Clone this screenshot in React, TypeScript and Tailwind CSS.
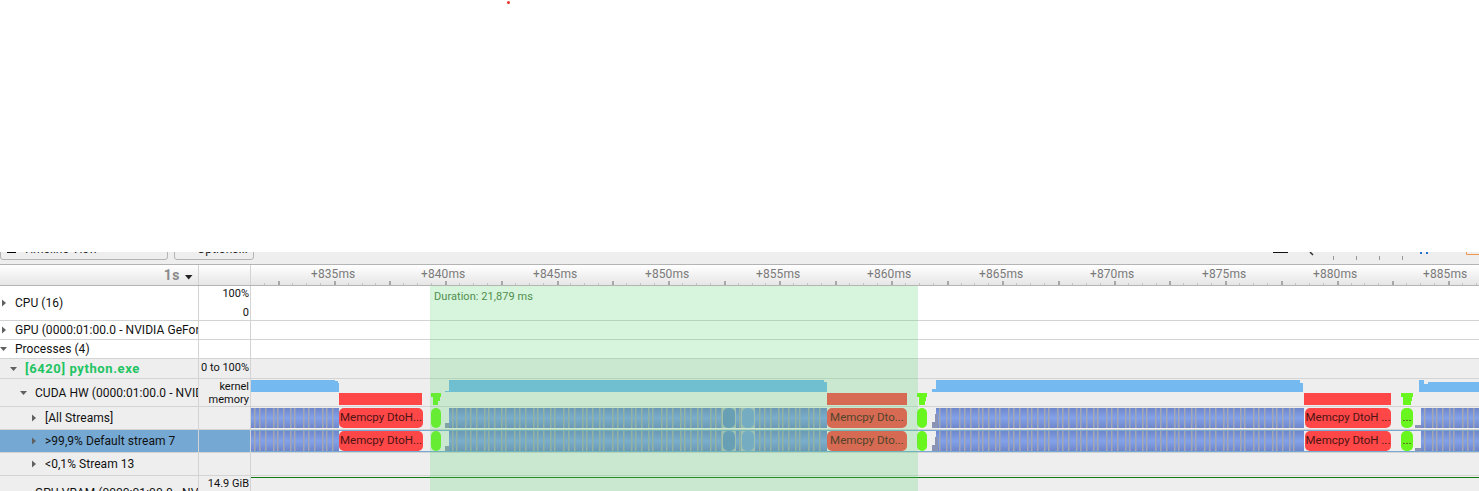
import React from 'react';

const TRACK_LEFT = 251;

// x positions below are page coordinates, same as the ruler
const bands = [
  [251, 339],
  [449, 827],
  [936, 1304],
  [1421, 1479],
];

const steps = [
  [445, 449, 15],
  [932, 936, 14],
  [935, 938, 6],
  [1415, 1421, 17],
];

const pills = [
  { left: 339, right: 423, text: 'Memcpy DtoH...', color: 'bg-[#ff4747]' },
  { left: 431, right: 441, text: '', color: 'bg-[#69f51e]' },
  { left: 827, right: 907, text: 'Memcpy Dto...', color: 'bg-[#ff4747]' },
  { left: 917, right: 927, text: '', color: 'bg-[#69f51e]' },
  { left: 1305, right: 1391, text: 'Memcpy DtoH ...', color: 'bg-[#ff4747]' },
  { left: 1401, right: 1413, text: '...', color: 'bg-[#69f51e]' },
];

const kernel = [
  [251, 335, 0],
  [335, 338, 1],
  [338, 339, 3],
  [445, 449, 11],
  [449, 824, 0],
  [824, 827, 2],
  [932, 936, 9],
  [936, 1300, 0],
  [1300, 1303, 3],
  [1419, 1424, 0],
  [1424, 1428, 4],
  [1428, 1479, 2],
];

const memory = [
  { left: 339, right: 422, color: 'bg-[#ff4747]' },
  { left: 827, right: 907, color: 'bg-[#ff4747]' },
  { left: 1304, right: 1391, color: 'bg-[#ff4747]' },
];

// green memory markers: top edge, then the narrower stem under it
const markers = [
  { a: 431, b: 441, c: 433, d: 438 },
  { a: 917, b: 927, c: 919, d: 925 },
  { a: 1401, b: 1413, c: 1403, d: 1411 },
];

const labels = [
  ['+835ms', 311],
  ['+840ms', 421],
  ['+845ms', 533],
  ['+850ms', 645],
  ['+855ms', 756],
  ['+860ms', 867],
  ['+865ms', 979],
  ['+870ms', 1090],
  ['+875ms', 1202],
  ['+880ms', 1313],
  ['+885ms', 1423],
] as const;

const pos = (left: number, right: number) => ({
  left: left - TRACK_LEFT,
  width: right - left,
});

function Arrow({ open }: { open?: boolean }) {
  return (
    <svg width="8" height="8" viewBox="0 0 8 8" className="shrink-0">
      {open ? <path d="M0 2h7L3.500 6z" fill="#606060" /> : <path d="M2 0.500v7L6 4z" fill="#606060" />}
    </svg>
  );
}

function Row({
  indent,
  open,
  label,
  labelClass,
  scale,
  height,
  white,
  selected,
  children,
}: {
  indent: string;
  open?: boolean;
  label: string;
  labelClass?: string;
  scale?: React.ReactNode;
  height: string;
  white?: boolean;
  selected?: boolean;
  children?: React.ReactNode;
}) {
  const bg = selected ? 'bg-[#75a8d3]' : white ? 'bg-white' : 'bg-[#eeeeee]';
  return (
    <div className={`flex ${height} border-b border-[#d3d3d3] ${white ? 'bg-white' : 'bg-[#eeeeee]'}`}>
      <div className={`flex w-[198px] shrink-0 items-center gap-[7px] overflow-hidden whitespace-nowrap ${indent} ${bg}`}>
        <Arrow open={open} />
        <span className={labelClass ?? 'text-[12px] tracking-[0.05px] text-[#111]'}>{label}</span>
      </div>
      <div className={`w-[53px] shrink-0 border-x border-[#d3d3d3] pr-[1px] text-right text-[11px] leading-[14px] text-[#111] ${bg}`}>
        {scale}
      </div>
      <div className="relative min-w-0 flex-1">{children}</div>
    </div>
  );
}

function StreamBands() {
  const stripes: number[] = [];
  bands.forEach(([a, b]) => {
    let x = a + 3;
    let i = 0;
    while (x < b - 2) {
      stripes.push(x);
      x += [7, 4, 9, 5, 6, 8, 4, 6][(i + a) % 8];
      i++;
    }
  });
  return (
    <svg width="1228" height="20" className="absolute left-0 top-[1px]">
      <defs>
        <linearGradient id="band" x1="0" y1="0" x2="0" y2="1">
          <stop offset="0" stopColor="#6f86ca" />
          <stop offset="0.5" stopColor="#83a2ea" />
          <stop offset="1" stopColor="#6f86ca" />
        </linearGradient>
      </defs>
      {bands.map(([a, b]) => (
        <rect key={a} x={a - TRACK_LEFT} y="0" width={b - a} height="20" fill="url(#band)" />
      ))}
      {stripes.map((x) => (
        <rect key={x} x={x - TRACK_LEFT} y="0" width="1.500" height="20" fill="#a3a7b2" />
      ))}
      {steps.map(([a, b, top]) => (
        <rect key={a + top} x={a - TRACK_LEFT} y={top} width={b - a} height={20 - top} fill="#8b93b5" />
      ))}
      <rect x={722 - TRACK_LEFT} y="0" width="14" height="20" fill="#b5bcc4" />
      <rect x={741 - TRACK_LEFT} y="0" width="14" height="20" fill="#b5bcc4" />
      <rect x={723 - TRACK_LEFT} y="0" width="12" height="20" rx="5" fill="#6d8ecb" />
      <rect x={742 - TRACK_LEFT} y="0" width="12" height="20" rx="5" fill="#7c9fdd" />
    </svg>
  );
}

function StreamTrack({ lined }: { lined?: boolean }) {
  return (
    <div className="absolute inset-0">
      <StreamBands />
      {lined && <div className="absolute left-0 right-0 top-0 h-px bg-[#75a8d3]" />}
      {lined && <div className="absolute left-0 right-0 top-[21px] h-px bg-[#75a8d3]" />}
      {pills.map((p) => (
        <div
          key={p.left}
          className={`absolute top-[1px] flex h-[20px] items-center justify-center overflow-hidden whitespace-nowrap rounded-[5px] text-[11.5px] text-[#4d1414] ${p.color}`}
          style={pos(p.left, p.right)}
        >
          {p.text}
        </div>
      ))}
    </div>
  );
}

function HwTrack() {
  return (
    <div className="absolute inset-0">
      <svg width="1228" height="13" className="absolute left-0 top-[1px]">
        {kernel.map(([a, b, top]) => (
          <rect key={a} x={a - TRACK_LEFT} y={top} width={b - a} height={12 - top} fill="#74b9f0" />
        ))}
      </svg>
      {memory.map((m) => (
        <div key={m.left} className={`absolute top-[14px] h-[12px] ${m.color}`} style={pos(m.left, m.right)} />
      ))}
      <svg width="1228" height="12" className="absolute left-0 top-[14px]">
        {markers.map((m) => (
          <path
            key={m.a}
            d={`M${m.a - TRACK_LEFT} 0H${m.b - TRACK_LEFT}V4H${m.b - TRACK_LEFT - 1}V8H${m.d - TRACK_LEFT}V12H${m.c - TRACK_LEFT}V4H${m.a - TRACK_LEFT}z`}
            fill="#69f51e"
          />
        ))}
      </svg>
    </div>
  );
}

function Ruler() {
  const ticks: { x: number; major: boolean }[] = [];
  for (let i = 0; i < 90; i++) {
    ticks.push({ x: Math.round(264 + i * 13.93), major: (i - 1) % 4 === 0 });
  }
  return (
    <div className="flex h-[21px] border-b border-[#b4b4b4] bg-linear-to-b from-white to-[#e6e6e6]">
      <div className="flex w-[198px] shrink-0 items-center justify-end gap-[5px] pr-[5px] font-bold">
        <span className="text-[14px] tracking-[0.5px] text-[#8a8a8a]">1s</span>
        <svg width="8" height="5" viewBox="0 0 8 5" className="mt-[4px]">
          <path d="M0 0h7.500L3.700 4.500z" fill="#222" />
        </svg>
      </div>
      <div className="w-[53px] shrink-0 border-x border-[#d3d3d3]" />
      <div className="relative flex-1 overflow-hidden">
        {labels.map(([text, x]) => (
          <span
            key={text}
            className="absolute top-[1px] text-[12px] leading-[16px] tracking-[0.1px] text-[#7a7a7a]"
            style={{ left: x - TRACK_LEFT }}
          >
            {text}
          </span>
        ))}
        <svg width="1228" height="20" className="absolute left-0 top-0">
          {ticks.map((t) => (
            <rect
              key={t.x}
              x={t.x - TRACK_LEFT}
              y={t.major ? 16 : 18}
              width={t.major ? 2 : 1}
              height={t.major ? 4 : 2}
              fill={t.major ? '#a8a8a8' : '#c4c4c4'}
            />
          ))}
        </svg>
      </div>
    </div>
  );
}

function Toolbar() {
  return (
    <div className="flex h-[13px] items-end overflow-hidden border-b border-[#b4b4b4] bg-[#eeeeee] pb-[4px]">
      <div className="flex h-[22px] w-[168px] shrink-0 items-center rounded-b-[3px] border border-[#b4b4b4] pl-[6px] text-[12px] text-[#222]">
        <span className="mt-[6px] h-px w-[9px] bg-black" />
        <span className="ml-[7px]">Timeline View</span>
      </div>
      <div className="ml-[6px] flex h-[22px] w-[80px] shrink-0 items-center rounded-b-[3px] border border-[#b4b4b4] pl-[22px] text-[12px] text-[#222]">
        <span>Options...</span>
      </div>
      <svg width="219" height="12" className="mb-[-4px] ml-auto shrink-0">
        <rect x="13" y="0" width="15" height="1" fill="#111" />
        <path d="M50 0l3 3" stroke="#333" strokeWidth="1.500" />
        {[73, 96, 119, 142].map((x) => (
          <rect key={x} x={x} y="4" width="1" height="4" fill="#999" />
        ))}
        <rect x="160" y="0" width="2" height="2" fill="#2a6fc9" />
        <rect x="166" y="0" width="2" height="2" fill="#2a6fc9" />
        <path d="M206.500 0v2.500H219" fill="none" stroke="#f0964a" strokeWidth="1" />
      </svg>
    </div>
  );
}

export default function App() {
  return (
    <div className="relative h-[491px] overflow-hidden bg-white font-['Roboto',sans-serif]">
      <div className="absolute left-[507px] top-[1px] h-[3px] w-[3px] rounded-full bg-[#e8322a]" />
      <div className="h-[252px]" />
      <Toolbar />
      <Ruler />
      <div className="relative">
        <Row indent="pl-0" label="CPU (16)" height="h-[35px]" white scale={<div className="flex h-full flex-col justify-between pt-[1px]"><span>100%</span><span>0</span></div>} />
        <Row indent="pl-0" label="GPU (0000:01:00.0 - NVIDIA GeForce RTX" height="h-[19px]" white />
        <Row indent="pl-0" open label="Processes (4)" height="h-[19px]" white />
        <Row
          indent="pl-[10px]"
          open
          label="[6420] python.exe"
          labelClass="text-[13px] font-bold tracking-[0.6px] text-[#1fc463]"
          height="h-[20px]"
          scale={<span className="leading-[18px]">0 to 100%</span>}
        />
        <Row
          indent="pl-[20px]"
          open
          label="CUDA HW (0000:01:00.0 - NVIDIA GeForce"
          height="h-[28px]"
          scale={<div className="pt-[1px] leading-[13px]">kernel<br />memory</div>}
        >
          <HwTrack />
        </Row>
        <Row indent="pl-[30px]" label="[All Streams]" height="h-[23px]">
          <StreamTrack />
        </Row>
        <Row indent="pl-[30px]" selected label=">99,9% Default stream 7" height="h-[23px]">
          <StreamTrack lined />
        </Row>
        <Row indent="pl-[30px]" label="<0,1% Stream 13" height="h-[23px]" />
        <Row
          indent="pl-[20px]"
          open
          label="GPU VRAM (0000:01:00.0 - NVIDIA GeForce"
          height="h-[34px]"
          scale={<div className="pt-[1px]">14.9 GiB</div>}
        >
          <div className="mt-[1px] h-px bg-[#0f7a0f]" />
        </Row>
        <div className="absolute bottom-0 left-[430px] top-0 w-[488px] bg-[rgba(95,211,115,0.25)] pl-[4px] pt-[4px] text-[11px] leading-[13px] tracking-[0.05px] text-[#4f8f4f]">
          Duration: 21,879 ms
        </div>
      </div>
    </div>
  );
}
